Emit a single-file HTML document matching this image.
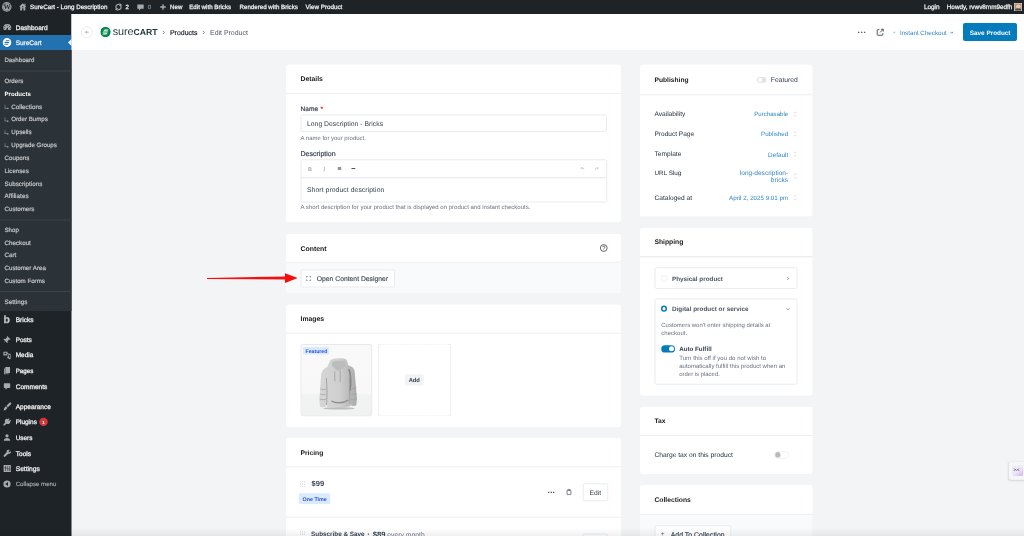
<!DOCTYPE html>
<html lang="en"><head><meta charset="utf-8"><title>Edit Product</title>
<style>
*{box-sizing:border-box;margin:0;padding:0}
html,body{width:1024px;height:536px;overflow:hidden;background:#f3f4f6;font-family:"Liberation Sans",sans-serif;text-rendering:geometricPrecision;-webkit-font-smoothing:antialiased}
#clip{position:absolute;left:0;top:0;width:1024px;height:536px;overflow:hidden}
#sc{position:absolute;left:0;top:0;width:4096px;height:2144px;transform:scale(.25);transform-origin:0 0}
#root{position:relative;width:1024px;height:536px;overflow:hidden;background:#f3f4f6;zoom:4}
.a{position:absolute}
.t{position:absolute;white-space:nowrap;line-height:1;margin-top:.6px;transform:translateY(-50%);font-size:5.9px;color:#1f2937}
.r{transform:translate(-100%,-50%)}
.card{position:absolute;background:#fff;border-radius:2.5px;box-shadow:0 0 .5px rgba(0,0,0,.04)}
.hr{position:absolute;height:1px;background:#eef0f2}
.h{font-weight:bold;font-size:6.8px;color:#17181c;margin-top:.1px}
.box{position:absolute;background:#fff;border:1px solid #e9ebef;border-radius:2px}
.sm{font-size:5.9px;color:#6b7280}
.lbl{font-size:6.6px;color:#374151;-webkit-text-stroke:.18px #374151}
.blue{color:#2f86c5}
/* admin */
#bar{left:0;top:0;width:1024px;height:14px;background:#1d2327}
#side{left:0;top:14px;width:71.5px;height:522px;background:#1d2327}
#sub{left:0;top:50px;width:71.5px;height:261px;background:#2c3338}
.bt{color:#f0f0f1;font-size:6.1px;-webkit-text-stroke:.25px #f0f0f1}
.mi{color:#f0f0f1;font-size:6.5px;-webkit-text-stroke:.28px #f0f0f1;left:15.5px}
.si{color:#c3c4c7;font-size:5.8px;left:4.6px;-webkit-text-stroke:.2px #c3c4c7}
.ic{position:absolute;transform:translate(-50%,-50%)}
.dots{width:5.400px;height:5.400px;background:radial-gradient(circle,#8f96a1 .5px,transparent .75px) 0 0/1.800px 1.800px}
</style></head><body><div id="clip"><div id="sc"><div id="root">
<!-- ADMINBAR -->
<div id="bar" class="a"></div>
<div class="a" style="left:1.900px;top:2.100px;width:9.600px;height:9.600px;border-radius:50%;background:#a0a4a8"></div><div class="a" style="left:2.800px;top:3px;width:7.800px;height:7.800px;border-radius:50%;border:.45px solid #1d2327"></div><div class="t" style="left:3.450px;top:6.700px;font-family:'Liberation Serif',serif;font-weight:bold;font-size:7.200px;color:#1d2327">W</div>
<svg class="ic" style="left:22.8px;top:7px" width="9" height="9" viewBox="0 0 20 20"><path d="M10 1.5 2 9.5h2.3V18h4.200v-5.500h3V18h4.200V9.500H18z" fill="#a7aaad"></path><rect x="13.8" y="2.500" width="2.300" height="4.500" fill="#a7aaad"></rect><rect x="8.700" y="8" width="2.600" height="2.600" fill="#1d2327"></rect></svg>
<div class="t bt" style="left: 30px; top: 7px; letter-spacing: 0.001px; font-size: 6.24px;">SureCart - Long Description</div>
<svg class="ic" style="left:118.400px;top:7px" width="8.400" height="8.400" viewBox="0 0 20 20"><circle cx="10" cy="10" r="6.200" fill="none" stroke="#a7aaad" stroke-width="2.600"></circle><path d="M12 0.500 18.500 4.500 12 8zM8 19.500 1.500 15.500 8 12z" fill="#a7aaad"></path><path d="M12.500 2.500 10.500 7M7.500 17.500 9.500 13" stroke="#1d2327" stroke-width="1.200"></path></svg>
<div class="t bt" style="left:125.5px;top:7px">2</div>
<svg class="ic" style="left:140.5px;top:7.3px" width="8" height="8" viewBox="0 0 20 20"><path d="M3 3h14a1 1 0 0 1 1 1v9a1 1 0 0 1-1 1h-6l-5 4v-4H3a1 1 0 0 1-1-1V4a1 1 0 0 1 1-1z" fill="#a7aaad"></path></svg>
<div class="t bt" style="left:147.7px;top:7px;color:#8c8f94;-webkit-text-stroke:.2px #8c8f94">0</div>
<svg class="ic" style="left:163px;top:7px" width="7" height="7" viewBox="0 0 20 20"><path d="M8 2h4v6h6v4h-6v6H8v-6H2V8h6z" fill="#a7aaad"></path></svg>
<div class="t bt" style="left: 170px; top: 7px; letter-spacing: -0.004px; font-size: 6.18px;">New</div>
<div class="t bt" style="left: 189.25px; top: 7px; letter-spacing: -0.003px; font-size: 6.18px;">Edit with Bricks</div>
<div class="t bt" style="left: 239.5px; top: 7px; letter-spacing: -0.002px; font-size: 6.18px;">Rendered with Bricks</div>
<div class="t bt" style="left: 305.5px; top: 7px; letter-spacing: -0.002px; font-size: 6.28px;">View Product</div>
<div class="t bt" style="left: 923.9px; top: 7px; letter-spacing: -0.001px; font-size: 6.42px;">Login</div>
<div class="t bt" style="left: 946.75px; top: 7px; letter-spacing: -0.001px; font-size: 6.36px;">Howdy, rvwv8mm9edfh</div>
<div class="a" style="left:1014px;top:3px;width:8px;height:8px;background:#b98a6a;border:.5px solid #ddd;overflow:hidden"><div class="a" style="left:1.5px;top:1px;width:4.500px;height:4px;border-radius:50%;background:#e9c9ae"></div><div class="a" style="left:.5px;top:5px;width:6.500px;height:4px;border-radius:40% 40% 0 0;background:#3c4c5c"></div></div>
<!-- SIDEBAR -->
<div id="side" class="a"></div>
<div id="sub" class="a"></div>
<div class="a" style="left:0;top:35px;width:71.5px;height:15px;background:#2271b1"></div>
<div class="a" style="left:67.900px;top:39px;width:0;height:0;border:3.600px solid transparent;border-right-color:#f3f4f6;border-left:0"></div>
<div class="t si" style="top: 60px; letter-spacing: 0.002px; font-size: 6.1px; left: 4.5px;">Dashboard</div>
<div class="t si" style="top: 81px; letter-spacing: 0px; font-size: 6.17px; left: 4.5px;">Orders</div>
<div class="t si" style="top: 93.75px; color: rgb(255, 255, 255); font-weight: bold; -webkit-text-stroke: 0px; letter-spacing: 0.001px; font-size: 6.08px; left: 4.5px;">Products</div>
<div class="a" style="left:4.800px;top:calc(106.5px - 1.800px);width:3.400px;height:3.800px;border-left:.7px solid #a7aaad;border-bottom:.7px solid #a7aaad"><i class="a" style="right:-.2px;bottom:-1px;width:1.300px;height:1.300px;border-radius:50%;background:#a7aaad"></i></div><div class="t si" style="left: 11.25px; top: 106.5px; letter-spacing: 0.022px; font-size: 6.26px;">Collections</div>
<div class="a" style="left:4.800px;top:calc(119.2px - 1.800px);width:3.400px;height:3.800px;border-left:.7px solid #a7aaad;border-bottom:.7px solid #a7aaad"><i class="a" style="right:-.2px;bottom:-1px;width:1.300px;height:1.300px;border-radius:50%;background:#a7aaad"></i></div><div class="t si" style="left: 11.25px; top: 119.2px; letter-spacing: -0.001px; font-size: 6.16px;">Order Bumps</div>
<div class="a" style="left:4.800px;top:calc(132px - 1.800px);width:3.400px;height:3.800px;border-left:.7px solid #a7aaad;border-bottom:.7px solid #a7aaad"><i class="a" style="right:-.2px;bottom:-1px;width:1.300px;height:1.300px;border-radius:50%;background:#a7aaad"></i></div><div class="t si" style="left: 11.25px; top: 132px; letter-spacing: -0.001px; font-size: 6.21px;">Upsells</div>
<div class="a" style="left:4.800px;top:calc(145px - 1.800px);width:3.400px;height:3.800px;border-left:.7px solid #a7aaad;border-bottom:.7px solid #a7aaad"><i class="a" style="right:-.2px;bottom:-1px;width:1.300px;height:1.300px;border-radius:50%;background:#a7aaad"></i></div><div class="t si" style="left: 11.25px; top: 145px; letter-spacing: 0px; font-size: 6.17px;">Upgrade Groups</div>
<div class="t si" style="top: 157.75px; letter-spacing: 0px; font-size: 6.21px; left: 4.5px;">Coupons</div>
<div class="t si" style="top: 170.5px; letter-spacing: 0.001px; font-size: 6.17px; left: 4.5px;">Licenses</div>
<div class="t si" style="top: 183.2px; letter-spacing: 0.022px; font-size: 6.26px; left: 4.5px;">Subscriptions</div>
<div class="t si" style="top: 196px; letter-spacing: 0.056px; font-size: 6.26px; left: 4.5px;">Affiliates</div>
<div class="t si" style="top: 208.7px; letter-spacing: -0.003px; font-size: 6.18px; left: 4.5px;">Customers</div>
<div class="t si" style="top: 229.5px; letter-spacing: -0.002px; font-size: 6.15px; left: 4.5px;">Shop</div>
<div class="t si" style="top: 242.2px; letter-spacing: -0.001px; font-size: 6.24px; left: 4.5px;">Checkout</div>
<div class="t si" style="top: 255px; letter-spacing: 0.006px; font-size: 6.26px; left: 4.5px;">Cart</div>
<div class="t si" style="top: 267.8px; letter-spacing: 0px; font-size: 6.2px; left: 4.5px;">Customer Area</div>
<div class="t si" style="top: 280.5px; letter-spacing: -0.001px; font-size: 6.16px; left: 4.5px;">Custom Forms</div>
<div class="t si" style="top: 301.3px; letter-spacing: 0.03px; font-size: 6.26px; left: 4.5px;">Settings</div>
<div class="a" style="left:0;top:70.5px;width:71.5px;height:1px;background:#3c434a"></div>
<div class="a" style="left:0;top:219.5px;width:71.5px;height:1px;background:#3c434a"></div>
<div class="a" style="left:0;top:291px;width:71.5px;height:1px;background:#3c434a"></div>
<div class="t mi" style="top: 27px; letter-spacing: 0.001px; font-size: 6.52px; left: 15.7px;">Dashboard</div>
<div class="t mi" style="top: 42.5px; letter-spacing: 0.002px; font-size: 6.47px; left: 15.7px;">SureCart</div>
<div class="t mi" style="top: 319px; letter-spacing: -0.002px; font-size: 6.58px; left: 15.7px;">Bricks</div>
<div class="t mi" style="top: 339.3px; letter-spacing: 0px; font-size: 6.46px; left: 15.7px;">Posts</div>
<div class="t mi" style="top: 354.8px; letter-spacing: 0.002px; font-size: 6.48px; left: 15.7px;">Media</div>
<div class="t mi" style="top: 370.3px; letter-spacing: 0.003px; font-size: 6.22px; left: 15.7px;">Pages</div>
<div class="t mi" style="top: 386px; letter-spacing: 0px; font-size: 6.55px; left: 15.7px;">Comments</div>
<div class="t mi" style="top: 406.5px; letter-spacing: -0.001px; font-size: 6.52px; left: 15.7px;">Appearance</div>
<div class="t mi" style="top: 422px; letter-spacing: 0px; font-size: 6.45px; left: 15.7px;">Plugins</div>
<div class="t mi" style="top: 437.5px; letter-spacing: 0.004px; font-size: 6.37px; left: 15.7px;">Users</div>
<div class="t mi" style="top: 453px; letter-spacing: 0px; font-size: 6.6px; left: 15.7px;">Tools</div>
<div class="t mi" style="top: 468.5px; letter-spacing: 0.002px; font-size: 6.68px; left: 15.7px;">Settings</div>
<div class="t mi" style="top: 484px; color: rgb(167, 170, 173); -webkit-text-stroke: 0.15px rgb(167, 170, 173); font-size: 6.1px; letter-spacing: -0.002px; left: 15.7px;">Collapse menu</div>
<div class="a" style="left:39.300px;top:417.700px;width:8.400px;height:8.400px;border-radius:50%;background:#d63638"></div><div class="t" style="left:42.300px;top:422px;color:#fff;font-size:4.500px;font-weight:bold">1</div>

<svg class="ic" style="left:7.300px;top:27.200px" width="10" height="10" viewBox="0 0 20 20"><path d="M10 3.500a8 8 0 0 0-8 8c0 1.500.4 2.900 1.100 4h13.800a8 8 0 0 0 1.100-4 8 8 0 0 0-8-8zm0 2a1 1 0 1 1 0 2 1 1 0 0 1 0-2zM5 7.500a1 1 0 1 1 0 2 1 1 0 0 1 0-2zm10 0a1 1 0 1 1 0 2 1 1 0 0 1 0-2zm-2.500 1.500-1.300 3.800a1.800 1.800 0 1 1-1.700-.6zM3.800 11.500a1 1 0 1 1 0 2 1 1 0 0 1 0-2zm12.400 0a1 1 0 1 1 0 2 1 1 0 0 1 0-2z" fill="#a7aaad"></path></svg>
<svg class="ic" style="left:7.100px;top:42.600px" width="8.800" height="8.800" viewBox="0 0 20 20"><circle cx="10" cy="10" r="10" fill="#fff"></circle><path d="M8.300 5h8l-2.300 2.300H6zM5.500 8.800h10.300l-2.300 2.400H3.200zM6 12.700h8l-2.300 2.300H3.700z" fill="#2271b1"></path></svg>
<div class="t" style="left:3.600px;top:318.600px;color:#c3c4c7;font-size:10.500px;font-weight:bold;-webkit-text-stroke:.3px #c3c4c7">b</div>
<svg class="ic" style="left:7px;top:339.600px" width="9.400" height="9.400" viewBox="0 0 20 20"><path d="M10.400 2.500 17.500 9.600l-1.400 1-2-.6-2.900 3.600.4 2.900-1.400 1-3.200-3.800-4.500 4 3.800-4.700L2.500 9.800l1-1.400 2.900.4 3.600-2.900-.6-2z" fill="#a7aaad"></path></svg>
<svg class="ic" style="left:7px;top:355px" width="9" height="9" viewBox="0 0 20 20"><path d="M2 3h9v3h2v2h-2v3H2zm2.500 2v3.500h4V5zM13 7h5v10.500a2 2 0 1 1-1.500-1.900V9.500h-2v6a2 2 0 1 1-1.500-1.900z" fill="#a7aaad"></path></svg>
<svg class="ic" style="left:7px;top:370.500px" width="8.500" height="8.500" viewBox="0 0 20 20"><path d="M6 2h11v14H6zM3 5h2v12h9v2H3z" fill="#a7aaad"></path></svg>
<svg class="ic" style="left:7px;top:386.300px" width="8.500" height="8.500" viewBox="0 0 20 20"><path d="M4 3h12a1.500 1.500 0 0 1 1.500 1.500v8A1.500 1.500 0 0 1 16 14h-5l-4.500 4v-4H4a1.500 1.500 0 0 1-1.500-1.500v-8A1.500 1.500 0 0 1 4 3z" fill="#a7aaad"></path></svg>
<svg class="ic" style="left:7.200px;top:406.400px" width="9.400" height="9.400" viewBox="0 0 20 20"><path d="M18.300 2c1 1 .6 2.400-.4 3.400l-6.400 6.400-3.200-3.200 6.400-6.400c1-1 2.600-1.200 3.600-.2zM7.300 9.600l3.200 3.200-1.300 1.300c-.8 2.800-3.800 4.200-7.700 4 1.800-1.200 1.600-2.800 2.200-4.300.5-1.300 1.600-2.300 3.600-4.200z" fill="#a7aaad"></path></svg>
<svg class="ic" style="left:7.200px;top:422.200px" width="9.400" height="9.400" viewBox="0 0 20 20"><path d="M13.300 1.800 15 3.500l-2.700 2.700 1.400 1.400 2.700-2.700 1.700 1.700-2.700 2.700 1.300 1.300-1.500 1.500c-2 2-4.800 2.300-6.900 1L5.500 15.900c-1.200 1.200-3 1.600-3.600 1s-.2-2.400 1-3.600L5.700 10.500c-1.300-2.100-1-4.900 1-6.900L8.200 2.100l1.300 1.300z" fill="#a7aaad"></path></svg>
<svg class="ic" style="left:7px;top:437.500px" width="8.500" height="8.500" viewBox="0 0 20 20"><circle cx="10" cy="6" r="3.800" fill="#a7aaad"></circle><path d="M2.500 17.500c0-4.500 3.300-6.500 7.500-6.500s7.500 2 7.500 6.500z" fill="#a7aaad"></path></svg>
<svg class="ic" style="left:7px;top:453px" width="8.500" height="8.500" viewBox="0 0 20 20"><path d="M16.700 2.800 14 5.500l.5 2 2 .5 2.700-2.700c.8 2.300-.1 4.500-2 5.700-1.300.8-2.700.9-4 .5L6 18.500c-1 1-2.500 1-3.500 0s-1-2.500 0-3.500l7-7.200c-.4-1.300-.3-2.700.5-4 1.200-1.900 4.400-2.200 6.700-1z" fill="#a7aaad"></path></svg>
<svg class="ic" style="left:7.300px;top:468.600px" width="8.600" height="8.600" viewBox="0 0 20 20"><rect x="1.500" y="2" width="17" height="16" rx="1" fill="#a7aaad"></rect><path d="M6 4.500v11M11 4.500v5M11 12v3.500M15.500 4.500v7M15.500 13.800v1.700" stroke="#1d2327" stroke-width="1.300"></path><path d="M4 8h4M9 10.500h4M13.500 12.600h4" stroke="#1d2327" stroke-width="1.600"></path></svg>
<svg class="ic" style="left:7px;top:484px" width="8" height="8" viewBox="0 0 20 20"><circle cx="10" cy="10" r="9" fill="#a7aaad"></circle><path d="M12.500 5v10L5.500 10z" fill="#1d2327"></path></svg>
<!-- HEADER -->
<div id="head" class="a" style="left:71.5px;top:14px;width:952.5px;height:36px;background:#fff"></div>

<div class="a" style="left:81px;top:26.400px;width:11.800px;height:11.800px;border-radius:50%;border:.8px solid #e3e6ea;background:#fff"></div>
<svg class="ic" style="left:86.900px;top:32.300px" width="4.200" height="4.200" viewBox="0 0 10 10"><path d="M9 5H1.500M4.500 2 1.500 5l3 3" fill="none" stroke="#7b828c" stroke-width="1.300"></path></svg>
<svg class="ic" style="left:105.500px;top:31.900px" width="10.400" height="10.400" viewBox="0 0 20 20"><circle cx="10" cy="10" r="10" fill="#05864f"></circle><path d="M8.300 5.300h7.700l-2.200 2.200H6.100zM5.900 8.900h9.600l-2.200 2.200H3.700zM6.200 12.500h7.700l-2.200 2.200H4z" fill="#fff"></path></svg>
<div class="t" style="left:112.800px;top:31.200px;font-size:10.800px;color:#1a3838;letter-spacing:-.1px">sure<span style="font-weight:bold;font-size:8.700px;letter-spacing:0">CART</span></div>
<svg class="ic" style="left:163.4px;top:32.400px" width="3.200" height="4.800" viewBox="0 0 6.400 9.600"><path d="M1.800 1.600 4.800 4.800l-3 3.200" fill="none" stroke="#5b6370" stroke-width="1.500"></path></svg>
<div class="t" style="left: 170px; top: 32px; font-size: 6.93px; color: rgb(17, 24, 39); -webkit-text-stroke: 0.15px rgb(17, 24, 39); letter-spacing: 0px;">Products</div>
<svg class="ic" style="left:203.4px;top:32.400px" width="3.200" height="4.800" viewBox="0 0 6.400 9.600"><path d="M1.800 1.600 4.800 4.800l-3 3.200" fill="none" stroke="#5b6370" stroke-width="1.500"></path></svg>
<div class="t" style="left: 210px; top: 32px; font-size: 6.95px; color: rgb(75, 85, 99); letter-spacing: 0px;">Edit Product</div>
<svg class="ic" style="left:861.700px;top:32.200px" width="8" height="2" viewBox="0 0 16 4"><circle cx="2" cy="2" r="1.500" fill="#374151"></circle><circle cx="8" cy="2" r="1.500" fill="#374151"></circle><circle cx="14" cy="2" r="1.500" fill="#374151"></circle></svg>
<svg class="ic" style="left:880.200px;top:32.200px" width="8.600" height="8.600" viewBox="0 0 20 20"><path d="M8 4H4.500A1.500 1.500 0 0 0 3 5.500v10A1.500 1.500 0 0 0 4.500 17h10a1.500 1.500 0 0 0 1.500-1.500V12M11.500 3H17v5.500M17 3l-7.500 7.500" fill="none" stroke="#374151" stroke-width="2"></path></svg>
<div class="a" style="left:893.400px;top:31.500px;width:1.800px;height:1.800px;border-radius:50%;background:#9ec6e3"></div>
<div class="t blue" style="left: 899.9px; top: 32.4px; font-size: 6.24px; letter-spacing: 0.002px;">Instant Checkout</div>
<svg class="ic" style="left:951.800px;top:32.500px" width="4.600" height="4.600" viewBox="0 0 10 10"><path d="M2 3.500 5 6.500l3-3" fill="none" stroke="#2f86c5" stroke-width="1.800"></path></svg>
<div class="a" style="left:963px;top:23px;width:54px;height:18px;border-radius:2px;background:#037bbc"></div>
<div class="t" style="left: 969.8px; top: 32.2px; font-size: 6.36px; color: rgb(255, 255, 255); font-weight: bold; letter-spacing: 0px;">Save Product</div>

<!-- DETAILS -->
<div class="card" style="left:286px;top:64.500px;width:335px;height:157.700px"></div>
<div class="t h" style="left: 300.5px; top: 78.7px; letter-spacing: -0.001px; font-size: 6.82px;">Details</div>
<div class="hr" style="left:286px;top:93px;width:335px"></div>
<div class="t lbl" style="left:300.500px;top:108.300px">Name<span style="color:#e11d2a;-webkit-text-stroke:.18px #e11d2a;margin-left:2.300px">*</span></div>
<div class="box" style="left:300.500px;top:114.500px;width:306.500px;height:17.500px"></div>
<div class="t" style="left: 307px; top: 123.2px; font-size: 6.8px; color: rgb(55, 65, 81); letter-spacing: 0.022px;">Long Description - Bricks</div>
<div class="t sm" style="left: 300.5px; top: 137.5px; letter-spacing: 0px; font-size: 5.97px;">A name for your product.</div>
<div class="t lbl" style="left: 300.5px; top: 153.7px; letter-spacing: -0.001px; font-size: 7.02px;">Description</div>
<div class="box" style="left:300.500px;top:159.300px;width:306.800px;height:43.300px"></div>
<div class="hr" style="left:301px;top:177.200px;width:305.500px;background:#e5e7eb"></div>
<div class="t" style="left:308.100px;top:168.600px;font-size:5.400px;color:#a3a9b2;font-weight:bold">B</div>
<div class="t" style="left:323.200px;top:168.500px;font-size:6.200px;color:#9ca3af;font-style:italic;font-family:'Liberation Serif',serif">I</div>
<div class="a" style="left:337.800px;top:167.100px;width:3.400px;height:.7px;background:#6b7280;box-shadow:0 1.100px 0 #6b7280,0 2.200px 0 #6b7280"></div>
<div class="a" style="left:351.600px;top:168.100px;width:3.700px;height:.9px;background:#4b5563"></div>
<svg class="ic" style="left:582.500px;top:168.500px" width="4" height="4" viewBox="0 0 10 10"><path d="M1 4h5a2.500 2.500 0 0 1 2.500 2.500V8M3.500 1.500 1 4l2.500 2.500" fill="none" stroke="#9ca3af" stroke-width="1.200"></path></svg>
<svg class="ic" style="left:596.800px;top:168.500px" width="4" height="4" viewBox="0 0 10 10"><path d="M9 4H4a2.500 2.500 0 0 0-2.500 2.500V8M6.500 1.500 9 4 6.500 6.500" fill="none" stroke="#9ca3af" stroke-width="1.200"></path></svg>
<div class="t" style="left: 307px; top: 189.3px; font-size: 6.8px; color: rgb(55, 65, 81); letter-spacing: 0.071px;">Short product description</div>
<div class="t sm" style="left: 300.5px; top: 207.2px; letter-spacing: 0px; font-size: 6.02px;">A short description for your product that is displayed on product and instant checkouts.</div>
<!-- CONTENT -->
<div class="card" style="left:286px;top:234px;width:335px;height:59.500px;background:#f9fafb"></div>
<div class="a" style="left:286px;top:234px;width:335px;height:28px;background:#fff;border-radius:2.500px 2.500px 0 0"></div>
<div class="t h" style="left: 300.5px; top: 248.2px; letter-spacing: 0.002px; font-size: 6.91px;">Content</div>
<div class="hr" style="left:286px;top:261.700px;width:335px"></div>
<svg class="ic" style="left:603.700px;top:248px" width="8.500" height="8.500" viewBox="0 0 20 20"><circle cx="10" cy="10" r="8" fill="none" stroke="#2b2e34" stroke-width="1.700"></circle><path d="M7.600 8a2.500 2.500 0 1 1 3.600 2.200c-.8.400-1.200.8-1.200 1.600" fill="none" stroke="#2b2e34" stroke-width="1.600"></path><circle cx="10" cy="14.300" r="1" fill="#2b2e34"></circle></svg>
<div class="box" style="left:300.500px;top:269.500px;width:94.500px;height:18px"></div>
<svg class="ic" style="left:308.500px;top:278.500px" width="5.500" height="5.500" viewBox="0 0 10 10"><path d="M1 3.500V1h2.500M6.500 1H9v2.500M9 6.500V9H6.500M3.500 9H1V6.500" fill="none" stroke="#4b5563" stroke-width="1.100"></path></svg>
<div class="t" style="left: 316.75px; top: 278.5px; font-size: 6.79px; color: rgb(69, 77, 91); -webkit-text-stroke: 0.15px rgb(69, 77, 91); letter-spacing: 0.001px;">Open Content Designer</div>
<!-- ARROW -->
<svg class="a" style="left:200px;top:268px" width="104" height="20" viewBox="200 268 104 20"><polygon points="207,277.900 287,276.500 287,279.500 207,278.900" fill="#f70d0d"></polygon><polygon points="285,273.200 297.700,278 285,283.100" fill="#f70d0d"></polygon></svg>
<!-- IMAGES -->
<div class="card" style="left:286px;top:304.500px;width:335px;height:122.500px"></div>
<div class="t h" style="left: 300.5px; top: 318.7px; letter-spacing: 0px; font-size: 6.85px;">Images</div>
<div class="hr" style="left:286px;top:332.800px;width:335px"></div>
<div class="a" style="left:300.500px;top:344.100px;width:71.800px;height:72.200px;border:1px solid #e6e8ec;border-radius:2.700px;background:linear-gradient(#f9f9f9 0,#f8f8f8 69%,#f1f2f2 71%,#f0f1f1 100%);overflow:hidden">
<svg class="a" style="left:0;top:0" width="71.800" height="71.800" viewBox="0 0 71.800 71.800">
<defs><linearGradient id="hg" x1="0" x2="1" y1="0" y2="0"><stop offset="0" stop-color="#d6d6d6"></stop><stop offset=".55" stop-color="#cfcfcf"></stop><stop offset="1" stop-color="#a9a9a9"></stop></linearGradient><filter id="bl"><feGaussianBlur stdDeviation=".5"></feGaussianBlur></filter></defs>
<ellipse cx="37.500" cy="63.300" rx="16" ry="1.300" fill="#bdbdbd" filter="url(#bl)"></ellipse>
<g filter="url(#bl)">
<path d="M28.500 15.500c2.500-2.300 12-3 16.500-.8l1.800 5.500c3.200 1 5.600 2.600 6.300 6l2.300 27.500-.6 6.500c-1.400.9-4 1-5.400.3l-.6-7.500.3 8c-5 1.600-18 2-23.600.8l.2-8.500-1.300 8.200c-1.600.9-4.600.9-6-.1l-.6-7 1.800-24.400c.4-4 2.500-6.600 6.400-8.200z" fill="url(#hg)"></path>
<path d="M31 17c3-1.500 9-1.700 12.500-.2l.8 3.200c-2 3-4.300 4.800-7.500 6-2.700-1.300-5-3.300-6.600-6.200z" fill="#bcbcbc"></path><path d="M47.300 24c2.500 6 2.300 14 1.200 22" stroke="#868686" stroke-width="1.600" fill="none"></path>
<path d="M24.800 33c.8 8 .9 17 .2 27M48.300 31c-.6 8-.3 19 .3 28" stroke="#9d9d9d" stroke-width=".9" fill="none"></path>
<path d="M19 44c2 .8 4 .9 5.500.2M18.700 49c2 .8 4 .9 5.700.2M18.500 54c2 .8 4.200.9 6 .2M49 43c2 .8 4.200.6 6-.2M49 49c2 .8 4.500.6 6.300-.2M49.300 54c2 .8 4.500.6 6.200-.2" stroke="#a2a2a2" stroke-width=".8" fill="none"></path>
<path d="M30 56c4 2.500 12 2.500 17-1" stroke="#8f8f8f" stroke-width="1.400" fill="none"></path>
<path d="M33.300 26.500v10M38.700 26v11" stroke="#8c8c8c" stroke-width=".6"></path>
</g>
</svg></div>
<div class="a" style="left:303px;top:347px;width:26px;height:7.500px;border-radius:1px;background:#dbeafe"></div>
<div class="t" style="left: 305.5px; top: 350.7px; font-size: 5.18px; font-weight: bold; color: rgb(42, 85, 224); letter-spacing: -0.003px;">Featured</div>
<div class="a" style="left:378.100px;top:343.800px;width:72.900px;height:72.500px;border:.9px dotted #d3d7dd;border-radius:2.500px;background:#fff"></div>
<div class="a" style="left:404.500px;top:374.300px;width:19.300px;height:11.200px;border-radius:1.500px;background:#f1f3f5"></div>
<div class="t" style="left: 408.7px; top: 379.7px; font-size: 5.74px; font-weight: bold; color: rgb(55, 65, 81); letter-spacing: -0.002px;">Add</div>
<!-- PRICING -->
<div class="card" style="left:286px;top:437.700px;width:335px;height:110px"></div>
<div class="t h" style="left: 300.5px; top: 452.8px; letter-spacing: 0.001px; font-size: 6.74px;">Pricing</div>
<div class="hr" style="left:286px;top:466.300px;width:335px"></div>
<svg class="a" style="left:299.8px;top:480.4px" width="5.400" height="6.600" viewBox="0 0 5.400 6.600"><circle cx="0.9" cy="0.90" r=".42" fill="#aab0b9"></circle><circle cx="2.7" cy="0.90" r=".42" fill="#aab0b9"></circle><circle cx="4.5" cy="0.90" r=".42" fill="#aab0b9"></circle><circle cx="0.9" cy="2.55" r=".42" fill="#aab0b9"></circle><circle cx="2.7" cy="2.55" r=".42" fill="#aab0b9"></circle><circle cx="4.5" cy="2.55" r=".42" fill="#aab0b9"></circle><circle cx="0.9" cy="4.20" r=".42" fill="#aab0b9"></circle><circle cx="2.7" cy="4.20" r=".42" fill="#aab0b9"></circle><circle cx="4.5" cy="4.20" r=".42" fill="#aab0b9"></circle><circle cx="0.9" cy="5.85" r=".42" fill="#aab0b9"></circle><circle cx="2.7" cy="5.85" r=".42" fill="#aab0b9"></circle><circle cx="4.5" cy="5.85" r=".42" fill="#aab0b9"></circle></svg>
<div class="t" style="left: 311.5px; top: 483.7px; font-size: 7.55px; font-weight: bold; color: rgb(55, 65, 81); letter-spacing: 0.002px;">$99</div>
<div class="a" style="left:298.700px;top:493.200px;width:31.600px;height:10.800px;border-radius:1.500px;background:#dbeafe"></div>
<div class="t" style="left: 302.5px; top: 498.8px; font-size: 5.37px; font-weight: bold; color: rgb(42, 85, 224); letter-spacing: -0.001px;">One Time</div>
<svg class="ic" style="left:551.300px;top:492.200px" width="7" height="1.800" viewBox="0 0 14 3.600"><circle cx="2" cy="1.800" r="1.500" fill="#374151"></circle><circle cx="7" cy="1.800" r="1.500" fill="#374151"></circle><circle cx="12" cy="1.800" r="1.500" fill="#374151"></circle></svg>
<svg class="ic" style="left:569px;top:492px" width="7" height="7" viewBox="0 0 20 20"><rect x="4.500" y="4.500" width="11" height="13" rx="1.800" fill="none" stroke="#1f2937" stroke-width="1.700"></rect><rect x="7.300" y="2.300" width="5.400" height="3.200" rx=".8" fill="#fff" stroke="#1f2937" stroke-width="1.500"></rect></svg>
<div class="box" style="left:582.700px;top:483.200px;width:25.600px;height:18px"></div>
<div class="t" style="left: 589.5px; top: 492.2px; font-size: 6.73px; color: rgb(55, 65, 81); letter-spacing: 0.002px;">Edit</div>
<div class="hr" style="left:286px;top:516.800px;width:335px"></div>
<svg class="a" style="left:299.8px;top:530.4px" width="5.400" height="6.600" viewBox="0 0 5.400 6.600"><circle cx="0.9" cy="0.90" r=".42" fill="#aab0b9"></circle><circle cx="2.7" cy="0.90" r=".42" fill="#aab0b9"></circle><circle cx="4.5" cy="0.90" r=".42" fill="#aab0b9"></circle><circle cx="0.9" cy="2.55" r=".42" fill="#aab0b9"></circle><circle cx="2.7" cy="2.55" r=".42" fill="#aab0b9"></circle><circle cx="4.5" cy="2.55" r=".42" fill="#aab0b9"></circle><circle cx="0.9" cy="4.20" r=".42" fill="#aab0b9"></circle><circle cx="2.7" cy="4.20" r=".42" fill="#aab0b9"></circle><circle cx="4.5" cy="4.20" r=".42" fill="#aab0b9"></circle><circle cx="0.9" cy="5.85" r=".42" fill="#aab0b9"></circle><circle cx="2.7" cy="5.85" r=".42" fill="#aab0b9"></circle><circle cx="4.5" cy="5.85" r=".42" fill="#aab0b9"></circle></svg>
<div class="t" style="left: 311.1px; top: 533.7px; font-size: 6.33px; font-weight: bold; color: rgb(55, 65, 81); letter-spacing: -0.001px;">Subscribe &amp; Save</div><div class="t" style="left:367.300px;top:533.300px;font-size:8.500px;font-weight:bold;color:#4b5563">·</div><div class="t" style="left: 372.8px; top: 533.7px; font-size: 7.7px; font-weight: bold; color: rgb(55, 65, 81); letter-spacing: 0.001px;">$89</div><div class="t" style="left: 387.2px; top: 533.7px; font-size: 6.82px; color: rgb(107, 114, 128); letter-spacing: 0.004px;">every month</div>
<div class="box" style="left:582.700px;top:533.500px;width:25.600px;height:18px"></div>

<!-- PUBLISHING -->
<div class="card" style="left:640px;top:64.500px;width:172.500px;height:152px"></div>
<div class="t h" style="left: 654.5px; top: 79.7px; letter-spacing: -0.004px; font-size: 6.68px;">Publishing</div>
<div class="a" style="left:757.100px;top:77.100px;width:9.100px;height:5.700px;border-radius:3px;background:#dfe3ea"></div>
<div class="a" style="left:757.900px;top:77.850px;width:4.200px;height:4.200px;border-radius:50%;background:#fff"></div>
<div class="t" style="left: 770.75px; top: 79.5px; font-size: 6.77px; color: rgb(55, 65, 81); letter-spacing: 0px;">Featured</div>
<div class="hr" style="left:640px;top:94.300px;width:172.500px"></div>
<div class="t" style="left: 654.5px; top: 113.5px; font-size: 6.56px; color: rgb(31, 41, 55); letter-spacing: -0.001px;">Availability</div><div class="t r blue" style="left: 788.15px; top: 114.1px; font-size: 6.09px; letter-spacing: 0px;">Purchasable</div>
<svg class="ic" style="left:795.200px;top:114px" width="4" height="7" viewBox="0 0 7 12"><path d="M1.500 4.300 3.500 2.300l2 2M1.500 7.700l2 2 2-2" fill="none" stroke="#c2c7ce" stroke-width="1"></path></svg>
<div class="t" style="left: 654.5px; top: 133.5px; font-size: 6.54px; color: rgb(31, 41, 55); letter-spacing: -0.002px;">Product Page</div><div class="t r blue" style="left: 788.15px; top: 134.1px; font-size: 6.17px; letter-spacing: 0.001px;">Published</div>
<svg class="ic" style="left:795.200px;top:134px" width="4" height="7" viewBox="0 0 7 12"><path d="M1.500 4.300 3.500 2.300l2 2M1.500 7.700l2 2 2-2" fill="none" stroke="#c2c7ce" stroke-width="1"></path></svg>
<div class="t" style="left: 654.5px; top: 153.5px; font-size: 6.62px; color: rgb(31, 41, 55); letter-spacing: 0px;">Template</div><div class="t r blue" style="left: 788.15px; top: 154.1px; font-size: 6.35px; letter-spacing: -0.002px;">Default</div>
<svg class="ic" style="left:795.200px;top:154px" width="4" height="7" viewBox="0 0 7 12"><path d="M1.500 4.300 3.500 2.300l2 2M1.500 7.700l2 2 2-2" fill="none" stroke="#c2c7ce" stroke-width="1"></path></svg>
<div class="t" style="left: 654.5px; top: 197.5px; font-size: 6.63px; color: rgb(31, 41, 55); letter-spacing: 0.001px;">Cataloged at</div><div class="t r blue" style="left: 788.15px; top: 197.1px; font-size: 6.22px; letter-spacing: -0.001px;">April 2, 2025 9:01 pm</div>
<svg class="ic" style="left:795.200px;top:197.5px" width="4" height="7" viewBox="0 0 7 12"><path d="M1.500 4.300 3.500 2.300l2 2M1.500 7.700l2 2 2-2" fill="none" stroke="#c2c7ce" stroke-width="1"></path></svg>
<div class="t" style="left: 654.5px; top: 172.5px; font-size: 6.33px; color: rgb(31, 41, 55); letter-spacing: 0px;">URL Slug</div><div class="t r blue" style="left: 788.15px; top: 171.9px; font-size: 6.54px; letter-spacing: 0px;">long-description-</div><div class="t r blue" style="left: 788.17px; top: 179.1px; font-size: 6.59px; letter-spacing: 0.023px;">bricks</div>
<svg class="ic" style="left:795.200px;top:176px" width="4" height="7" viewBox="0 0 7 12"><path d="M1.500 4.300 3.500 2.300l2 2M1.500 7.700l2 2 2-2" fill="none" stroke="#c2c7ce" stroke-width="1"></path></svg>

<!-- SHIPPING -->
<div class="card" style="left:640px;top:227.700px;width:172.500px;height:168px"></div>
<div class="t h" style="left: 654.5px; top: 241.7px; letter-spacing: -0.003px; font-size: 6.75px;">Shipping</div>
<div class="hr" style="left:640px;top:256.300px;width:172.500px;background:#e5e7eb"></div>
<div class="box" style="left:654.500px;top:267.200px;width:143px;height:21.800px"></div>
<div class="a" style="left:660.800px;top:275.300px;width:6.400px;height:6.400px;border-radius:50%;border:.6px solid #dfe2e7;background:#fff"></div>
<div class="t" style="left: 672px; top: 278.5px; font-size: 6.31px; font-weight: bold; color: rgb(75, 85, 99); letter-spacing: 0.001px;">Physical product</div>
<svg class="ic" style="left:788px;top:278.500px" width="4" height="4.500" viewBox="0 0 8 9"><path d="M2.500 1.500 5.500 4.500l-3 3" fill="none" stroke="#4b5563" stroke-width="1.200"></path></svg>
<div class="box" style="left:654.500px;top:298.500px;width:143px;height:86.200px"></div>
<div class="a" style="left:660.900px;top:305.600px;width:6.200px;height:6.200px;border-radius:50%;border:1.700px solid #037bbc;background:#fff"></div>
<div class="t" style="left: 672px; top: 308.7px; font-size: 6.35px; font-weight: bold; color: rgb(75, 85, 99); letter-spacing: 0.002px;">Digital product or service</div>
<svg class="ic" style="left:788px;top:309px" width="4.500" height="4" viewBox="0 0 9 8"><path d="M1.500 2.500 4.500 5.500l3-3" fill="none" stroke="#4b5563" stroke-width="1.200"></path></svg>
<div class="t sm" style="left: 661.25px; top: 324.7px; letter-spacing: 0px; font-size: 5.98px;">Customers won't enter shipping details at</div>
<div class="t sm" style="left: 661.25px; top: 333.2px; letter-spacing: 0px; font-size: 6.04px;">checkout.</div>
<div class="a" style="left:661.300px;top:345.200px;width:13.700px;height:7.200px;border-radius:4px;background:#037bbc"></div>
<div class="a" style="left:668.900px;top:346.300px;width:5px;height:5px;border-radius:50%;background:#fff"></div>
<div class="t" style="left: 679.25px; top: 348.7px; font-size: 6.2px; font-weight: bold; color: rgb(55, 65, 81); letter-spacing: -0.001px;">Auto Fulfill</div>
<div class="t sm" style="left: 679.25px; top: 358.2px; letter-spacing: -0.001px; font-size: 6.06px;">Turn this off if you do not wish to</div>
<div class="t sm" style="left: 679.25px; top: 366.2px; letter-spacing: 0.001px; font-size: 6.02px;">automatically fulfill this product when an</div>
<div class="t sm" style="left: 679.25px; top: 373.8px; letter-spacing: 0px; font-size: 5.94px;">order is placed.</div>
<!-- TAX -->
<div class="card" style="left:640px;top:406.700px;width:172.500px;height:67.300px"></div>
<div class="t h" style="left: 654.5px; top: 420.7px; letter-spacing: 0.002px; font-size: 6.73px;">Tax</div>
<div class="hr" style="left:640px;top:435px;width:172.500px"></div>
<div class="t" style="left: 654.5px; top: 454.7px; font-size: 6.68px; color: rgb(31, 41, 55); letter-spacing: 0px;">Charge tax on this product</div>
<div class="a" style="left:774.500px;top:451.200px;width:14.500px;height:7.200px;border-radius:4px;background:#fff;border:.6px solid #e2e5ea"></div>
<div class="a" style="left:775.300px;top:452.100px;width:5.300px;height:5.300px;border-radius:50%;background:#b9babc"></div>
<!-- COLLECTIONS -->
<div class="card" style="left:640px;top:485.200px;width:172.500px;height:70px;background:#f9fafb"></div>
<div class="a" style="left:640px;top:485.200px;width:172.500px;height:29px;background:#fff;border-radius:2.500px 2.500px 0 0"></div>
<div class="t h" style="left: 654.5px; top: 499.9px; letter-spacing: -0.003px; font-size: 6.75px;">Collections</div>
<div class="hr" style="left:640px;top:514px;width:172.500px"></div>
<div class="box" style="left:654.500px;top:525.200px;width:76.800px;height:18px"></div>
<div class="t" style="left:660.800px;top:533.500px;font-size:6.500px;color:#4b5563">+</div>
<div class="t" style="left: 670.75px; top: 533.8px; font-size: 6.8px; color: rgb(55, 65, 81); -webkit-text-stroke: 0.15px rgb(55, 65, 81); letter-spacing: 0.063px;">Add To Collection</div>
<!-- WIDGET -->
<div class="a" style="left:1008.700px;top:461.800px;width:20px;height:18px;border-radius:2.500px;background:#f5f6f8;box-shadow:0 .3px 2px rgba(0,0,0,.13)"></div>
<div class="a" style="left:1012px;top:465.200px;width:10.900px;height:10.800px;border-radius:1.500px;background:linear-gradient(140deg,#f2f0fb 0%,#ebe6f7 55%,#d2b0ee 100%)"></div>
<div class="t" style="left:1013.600px;top:469.300px;font-size:4.300px;color:#4b4b55;font-weight:bold;letter-spacing:-.1px">&gt;.&lt;</div>
<div class="a" style="left:0;top:528px;width:1024px;height:8px;background:linear-gradient(rgba(0,0,0,0),rgba(0,0,0,.06))"></div>

</div></div></div>
</body></html>
